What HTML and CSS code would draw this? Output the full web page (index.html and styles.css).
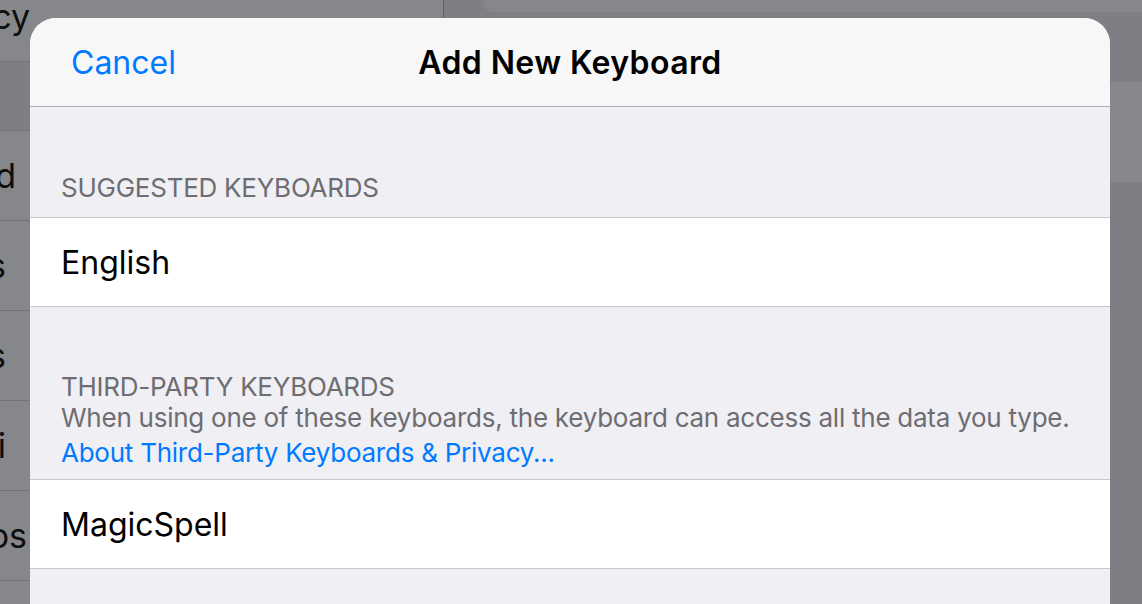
FILE: index.html
```html
<!DOCTYPE html>
<html lang="en">
<head>
<meta charset="utf-8">
<title>Add New Keyboard</title>
<link rel="stylesheet" href="styles.css">
</head>
<body>
<div class="screen">
  <aside class="sidebar">
    <div class="side-row side-row--first"><span class="side-label side-label--e30">Privacy</span></div>
    <div class="side-gap"></div>
    <div class="side-row"><span class="side-label side-label--e16">iCloud</span></div>
    <div class="side-row"><span class="side-label side-label--e6">Mail, Contacts, Calendars</span></div>
    <div class="side-row"><span class="side-label side-label--e6">Notes</span></div>
    <div class="side-row"><span class="side-label side-label--e6">Safari</span></div>
    <div class="side-row"><span class="side-label side-label--e27">Photos</span></div>
    <div class="side-row"></div>
  </aside>
  <main class="detail">
    <div class="detail-card"></div>
    <div class="detail-gap"></div>
    <div class="detail-row"></div>
  </main>

  <section class="modal">
    <header class="modal-header">
      <span class="cancel">Cancel</span>
      <h1 class="title">Add New Keyboard</h1>
      <span></span>
    </header>
    <div class="modal-body">
      <div class="group-header group-header--first">SUGGESTED KEYBOARDS</div>
      <div class="cell">English</div>
      <div class="group-header group-header--second">
        <div class="group-title">THIRD-PARTY KEYBOARDS</div>
        <div class="group-note">When using one of these keyboards, the keyboard can access all the data you type.</div>
        <div class="group-link">About Third-Party Keyboards &amp; Privacy...</div>
      </div>
      <div class="cell">MagicSpell</div>
    </div>
  </section>
</div>
</body>
</html>
```

FILE: styles.css
```css
* { box-sizing: border-box; }
html, body { margin: 0; padding: 0; }
body {
  width: 1142px;
  height: 604px;
  overflow: hidden;
  background: #7e7f84;
  font-family: Inter, "Noto Sans", "Liberation Sans", sans-serif;
}
.screen {
  position: relative;
  display: flex;
  width: 1142px;
  height: 604px;
  overflow: hidden;
}

/* dimmed background: sidebar */
.sidebar {
  width: 444px;
  flex: none;
  margin-top: -28px;
  background: #7e7f84;
  border-right: 1px solid #5e5f63;
}
.side-row {
  height: 90px;
  background: #86878b;
  border-bottom: 1px solid #727377;
  display: flex;
  align-items: center;
  overflow: hidden;
}
.side-gap {
  height: 69px;
  border-bottom: 1px solid #727377;
}
.side-label {
  display: flex;
  justify-content: flex-end;
  overflow: hidden;
  white-space: nowrap;
  font-size: 34px;
  color: #0e0e0f;
  flex: none;
}
.side-label--e30 { width: 30px; }
.side-label--e16 { width: 16px; }
.side-label--e6 { width: 6px; }
.side-label--e27 { width: 27px; }

/* dimmed background: detail */
.detail {
  flex: 1;
  display: flex;
  flex-direction: column;
  background: #7e7f84;
}
.detail-card {
  height: 12px;
  margin-left: 39px;
  background: #86878b;
  border-bottom-left-radius: 10px;
}
.detail-gap { height: 70px; }
.detail-row {
  height: 100px;
  background: #86878b;
}

/* modal sheet */
.modal {
  position: absolute;
  left: 30px;
  top: 18px;
  width: 1080px;
  height: 620px;
  background: #efeff4;
  border-radius: 26px 26px 0 0;
  overflow: hidden;
  display: flex;
  flex-direction: column;
}
.modal-header {
  height: 89px;
  flex: none;
  background: #f7f7f7;
  border-bottom: 1px solid #b1b1b1;
  display: grid;
  grid-template-columns: 1fr auto 1fr;
  align-items: center;
  padding: 1px 41px 0;
}
.cancel {
  font-size: 32px;
  color: #007aff;
  justify-self: start;
}
.title {
  margin: 0;
  font-size: 32px;
  font-weight: 600;
  letter-spacing: 0.4px;
  color: #000;
}

.modal-body {
  display: flex;
  flex-direction: column;
}
.group-header {
  padding: 0 31px;
  color: #6d6d72;
  font-size: 26px;
  letter-spacing: -0.25px;
}
.group-header--first {
  padding-top: 65px;
  padding-bottom: 13px;
  line-height: 32px;
}
.group-header--second {
  padding-top: 67px;
  padding-bottom: 9px;
}
.group-title {
  line-height: 26px;
}
.group-note {
  line-height: 35px;
  white-space: nowrap;
}
.group-link {
  line-height: 35px;
  color: #007aff;
}
.cell {
  height: 90px;
  background: #fff;
  border-top: 1px solid #c8c7cc;
  border-bottom: 1px solid #c8c7cc;
  display: flex;
  align-items: center;
  padding: 0 31px;
  font-size: 32px;
  color: #000;
}
```
